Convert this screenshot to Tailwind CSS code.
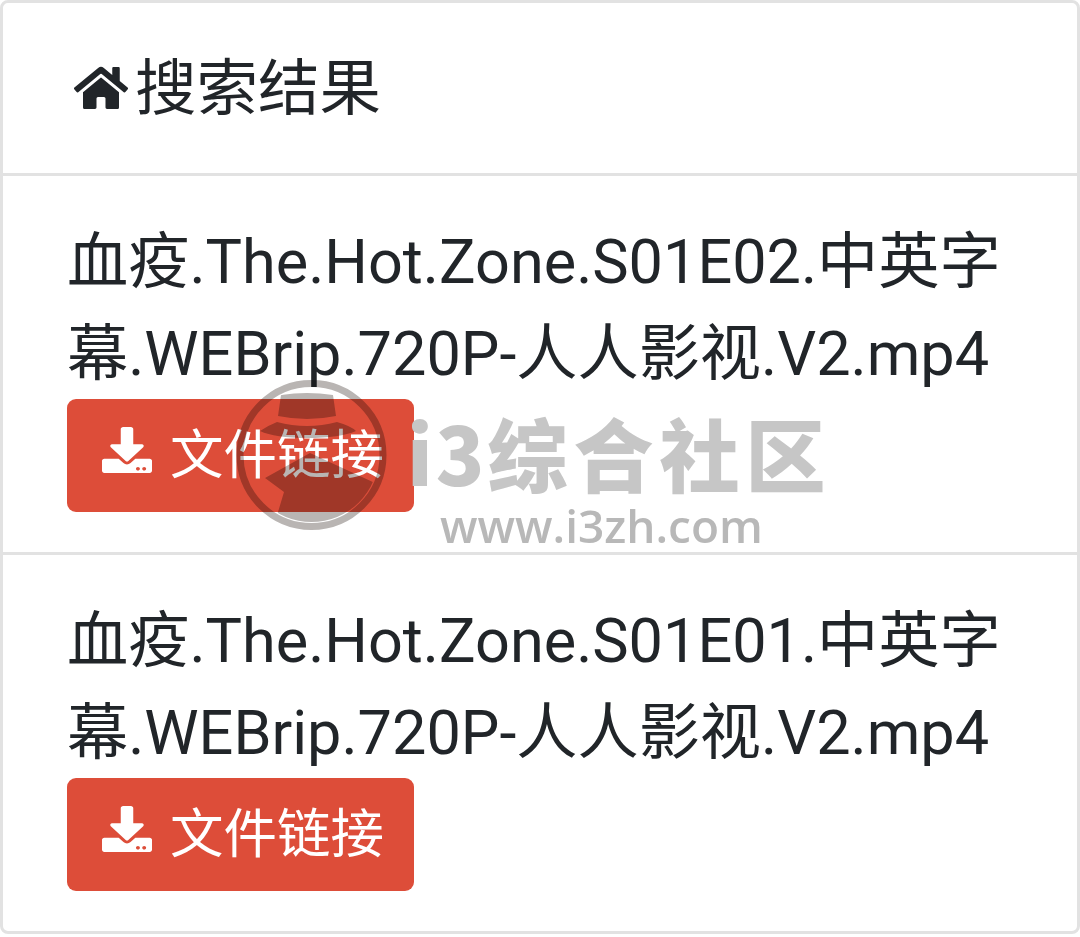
<!DOCTYPE html>
<html lang="zh">
<head>
  <meta charset="UTF-8" />
  <meta name="viewport" content="width=device-width, initial-scale=1" />
  <title>搜索结果</title>
  <script src="https://cdn.jsdelivr.net/npm/@tailwindcss/browser@4"></script>
</head>
<body class="bg-white font-['Roboto','Noto_Sans_CJK_SC',sans-serif] text-[#212529] overflow-hidden">
  <div class="relative h-[937px] w-[1080px] overflow-hidden">
    <div class="border-[3px] border-[#e2e2e2] rounded-[8px] bg-white">
      <!-- header -->
      <div class="h-[170px] pl-[71px] flex items-center border-b-[3px] border-[#e2e2e2] box-content">
        <svg class="w-[54px] h-[48px] mr-[7px] fill-[#212529]" viewBox="0 0 576 512"><path d="M280.37 148.26L96 300.11V464a16 16 0 0 0 16 16l112.06-.29a16 16 0 0 0 15.92-16V368a16 16 0 0 1 16-16h64a16 16 0 0 1 16 16v95.64a16 16 0 0 0 16 16.05L464 480a16 16 0 0 0 16-16V300L295.67 148.26a12.19 12.19 0 0 0-15.3 0zM571.6 251.47L488 182.56V44.05a12 12 0 0 0-12-12h-56a12 12 0 0 0-12 12v72.61L318.47 43a48 48 0 0 0-61 0L4.34 251.47a12 12 0 0 0-1.6 16.9l25.5 31A12 12 0 0 0 45.15 301l235.22-193.74a12.19 12.19 0 0 1 15.3 0L530.9 301a12 12 0 0 0 16.9-1.6l25.5-31a12 12 0 0 0-1.7-16.93z"/></svg>
        <h1 class="text-[61.5px] leading-none font-normal mt-[4px]">搜索结果</h1>
      </div>

      <!-- item 1 -->
      <div class="pt-[40px] pb-[40px] pl-[64px] pr-[50px] border-b-[3px] border-[#e2e2e2]">
        <p class="text-[61.2px] leading-[92px]">血疫.The.Hot.Zone.S01E02.中英字幕.WEBrip.720P-人人影视.V2.mp4</p>
        <a class="mt-[-1px] w-[347px] h-[113px] flex items-center pl-[35px] pt-[2px] bg-[#dd4d39] rounded-[9px] text-white text-[53.5px]">
          <svg class="w-[50px] h-[46px] mr-[18px] mt-[-13px] fill-white" viewBox="0 0 512 512" preserveAspectRatio="none"><path d="M216 0h80c13.3 0 24 10.7 24 24v168h87.7c17.8 0 26.7 21.5 14.1 34.1L269.7 378.3c-7.5 7.5-19.8 7.5-27.3 0L90.1 226.1c-12.6-12.6-3.7-34.1 14.1-34.1H192V24c0-13.3 10.7-24 24-24zm296 376v112c0 13.3-10.7 24-24 24H24c-13.3 0-24-10.7-24-24V376c0-13.3 10.7-24 24-24h146.7l49 49c20.1 20.1 52.5 20.1 72.6 0l49-49H488c13.3 0 24 10.7 24 24zm-124 88c0-11-9-20-20-20s-20 9-20 20 9 20 20 20 20-9 20-20zm64 0c0-11-9-20-20-20s-20 9-20 20 9 20 20 20 20-9 20-20z"/></svg>
          文件链接
        </a>
      </div>

      <!-- item 2 -->
      <div class="pt-[40px] pb-[40px] pl-[64px] pr-[50px]">
        <p class="text-[61.2px] leading-[92px]">血疫.The.Hot.Zone.S01E01.中英字幕.WEBrip.720P-人人影视.V2.mp4</p>
        <a class="mt-[-1px] w-[347px] h-[113px] flex items-center pl-[35px] pt-[2px] bg-[#dd4d39] rounded-[9px] text-white text-[53.5px]">
          <svg class="w-[50px] h-[46px] mr-[18px] mt-[-13px] fill-white" viewBox="0 0 512 512" preserveAspectRatio="none"><path d="M216 0h80c13.3 0 24 10.7 24 24v168h87.7c17.8 0 26.7 21.5 14.1 34.1L269.7 378.3c-7.5 7.5-19.8 7.5-27.3 0L90.1 226.1c-12.6-12.6-3.7-34.1 14.1-34.1H192V24c0-13.3 10.7-24 24-24zm296 376v112c0 13.3-10.7 24-24 24H24c-13.3 0-24-10.7-24-24V376c0-13.3 10.7-24 24-24h146.7l49 49c20.1 20.1 52.5 20.1 72.6 0l49-49H488c13.3 0 24 10.7 24 24zm-124 88c0-11-9-20-20-20s-20 9-20 20 9 20 20 20 20-9 20-20zm64 0c0-11-9-20-20-20s-20 9-20 20 9 20 20 20 20-9 20-20z"/></svg>
          文件链接
        </a>
      </div>
    </div>

    <!-- watermark -->
    <svg class="absolute left-[225px] top-[370px] w-[170px] h-[170px] mix-blend-multiply" viewBox="0 0 170 170">
      <defs><clipPath id="inner"><circle cx="86.5" cy="85" r="67"/></clipPath></defs>
      <circle cx="86.5" cy="85" r="71.5" fill="none" stroke="#b9b5b3" stroke-width="7"/>
      <g fill="#b9b5b3" clip-path="url(#inner)">
        <path d="M56 25 Q82 21 108 25 L111 46 Q82 52 53 46 Z"/>
        <path d="M52 52 Q82 60 112 52 Q126 56 131 61 Q115 68 82 68 Q50 68 35 61 Q42 56 52 52 Z"/>
        <path d="M40 108 L85 83 L150 113 L165 170 L40 170 L53 142 L59 122 Z"/>
      </g>
    </svg>
    <div class="absolute left-[407px] top-[411px] whitespace-nowrap tracking-[6px] font-['Noto_Sans_CJK_SC',sans-serif] font-black text-[80px] leading-[80px] text-[#c6c6c6]"><span class="tracking-[3px]">i3</span>综合社区</div>
    <div class="absolute left-[440px] top-[502px] whitespace-nowrap font-['Open_Sans','Noto_Sans',sans-serif] font-semibold text-[46px] leading-[46px] text-[#b8b8b8]">www.i3zh.com</div>
  </div>
</body>
</html>
